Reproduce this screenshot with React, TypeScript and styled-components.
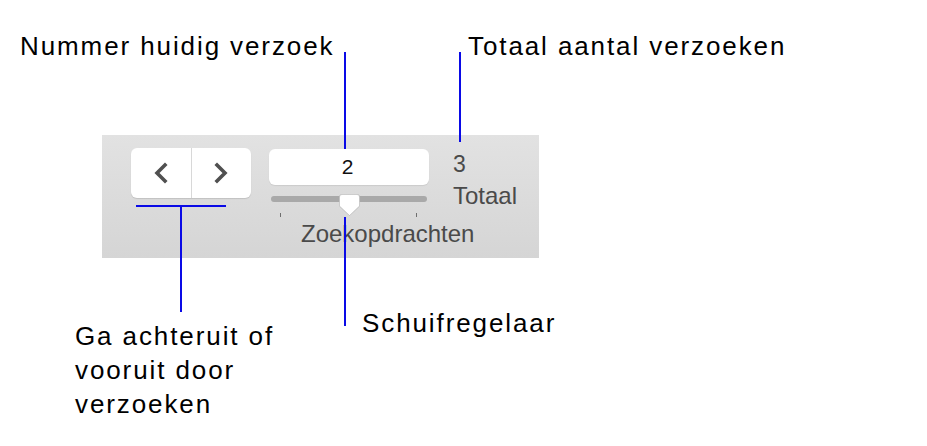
import styled, { createGlobalStyle } from 'styled-components';

const GlobalStyle = createGlobalStyle`
  html, body {
    margin: 0;
    padding: 0;
    background: #ffffff;
  }
  body {
    font-family: 'Liberation Sans', Arial, Helvetica, sans-serif;
  }
`;

const Figure = styled.div`
  position: relative;
  width: 927px;
  height: 446px;
  overflow: hidden;
  background: #ffffff;
  padding: 135px 0 0 102px;
  box-sizing: border-box;
`;

/* Toolbar strip with the request navigator */
const Toolbar = styled.div`
  width: 437px;
  height: 123px;
  box-sizing: border-box;
  display: flex;
  align-items: flex-start;
  padding: 13px 0 0 29px;
  background: linear-gradient(#e2e2e2, #d5d5d5);
`;

const Segmented = styled.div`
  display: flex;
  width: 120px;
  height: 50px;
  border-radius: 6px;
  background: #ffffff;
  box-shadow: 0 1px 1px rgba(0, 0, 0, 0.12);
  overflow: hidden;
`;

const SegButton = styled.button<{ $divider?: boolean }>`
  flex: 1;
  display: flex;
  align-items: center;
  justify-content: center;
  border: none;
  padding: 0;
  background: transparent;
  border-left: ${({ $divider }) => ($divider ? '1px solid #d8d8d8' : 'none')};
  cursor: default;
`;

const SliderColumn = styled.div`
  display: flex;
  flex-direction: column;
  width: 160px;
  margin: 1px 0 0 18px;
`;

const Field = styled.div`
  height: 36px;
  border-radius: 6px;
  background: #ffffff;
  box-shadow: 0 1px 1px rgba(0, 0, 0, 0.08);
  display: flex;
  align-items: center;
  justify-content: center;
  font-size: 21px;
  color: #111111;
  padding-right: 3px;
`;

const Track = styled.div`
  position: relative;
  height: 6px;
  margin: 11px 2px 0;
  border-radius: 3px;
  background: #a9a9a9;
`;

const Thumb = styled.svg`
  position: absolute;
  left: 68px;
  top: -2px;
  filter: drop-shadow(0 0.5px 0.5px rgba(0, 0, 0, 0.25));
`;

const Ticks = styled.div`
  display: flex;
  justify-content: space-between;
  padding: 0 12px 0 11px;
  margin-top: 11px;
`;

const Tick = styled.span`
  width: 1px;
  height: 4px;
  background: #6e6e6e;
`;

const SliderLabel = styled.div`
  margin: 3px 0 0 32px;
  font-size: 24px;
  line-height: 28px;
  color: #4a4a4a;
  white-space: nowrap;
`;

const TotalColumn = styled.div`
  display: flex;
  flex-direction: column;
  margin: 3px 0 0 24px;
  color: #4a4a4a;
`;

const Count = styled.div<{ $size: number }>`
  font-size: ${({ $size }) => $size}px;
  line-height: ${({ $size }) => $size + 4}px;
  margin-bottom: ${({ $size }) => ($size < 24 ? 4 : 0)}px;
`;

/* Callout labels and leader lines drawn over the figure */
const Callout = styled.div<{ $x: number; $y: number }>`
  position: absolute;
  left: ${({ $x }) => $x}px;
  top: ${({ $y }) => $y}px;
  font-size: 26px;
  line-height: 34px;
  letter-spacing: 1.9px;
  color: #000000;
  white-space: nowrap;
`;

const Leader = styled.span<{ $x: number; $y: number; $w: number; $h: number }>`
  position: absolute;
  left: ${({ $x }) => $x}px;
  top: ${({ $y }) => $y}px;
  width: ${({ $w }) => $w}px;
  height: ${({ $h }) => $h}px;
  background: #0a0ae6;
`;

const Chevron = ({ dir }: { dir: 'left' | 'right' }) => (
  <svg width="18" height="22" viewBox="0 0 18 22">
    <path
      d={dir === 'left' ? 'M13 3 L5 11 L13 19' : 'M5 3 L13 11 L5 19'}
      fill="none"
      stroke="#505050"
      strokeWidth="3.6"
      strokeLinecap="square"
    />
  </svg>
);

export default function App() {
  const current = 2;
  const total = 3;

  return (
    <>
      <GlobalStyle />
      <Figure>
        <Toolbar>
          <Segmented>
            <SegButton aria-label="Vorige">
              <Chevron dir="left" />
            </SegButton>
            <SegButton $divider aria-label="Volgende">
              <Chevron dir="right" />
            </SegButton>
          </Segmented>

          <SliderColumn>
            <Field>{current}</Field>
            <Track>
              <Thumb width="21" height="22" viewBox="0 0 21 22">
                <path
                  d="M3 0.5 H18 A2.5 2.5 0 0 1 20.5 3 V12 L10.5 21.5 L0.5 12 V3 A2.5 2.5 0 0 1 3 0.5 Z"
                  fill="#ffffff"
                  stroke="#c4c4c4"
                  strokeWidth="0.6"
                />
              </Thumb>
            </Track>
            <Ticks>
              <Tick />
              <Tick />
            </Ticks>
            <SliderLabel>Zoekopdrachten</SliderLabel>
          </SliderColumn>

          <TotalColumn>
            <Count $size={23}>{total}</Count>
            <Count $size={24}>Totaal</Count>
          </TotalColumn>
        </Toolbar>

        <Callout $x={20} $y={29}>Nummer huidig verzoek</Callout>
        <Callout $x={468} $y={29}>Totaal aantal verzoeken</Callout>
        <Callout $x={362} $y={306}>Schuifregelaar</Callout>
        <Callout $x={75} $y={319}>
          Ga achteruit of
          <br />
          vooruit door
          <br />
          verzoeken
        </Callout>

        <Leader $x={344} $y={52} $w={2} $h={97} />
        <Leader $x={459} $y={52} $w={2} $h={90} />
        <Leader $x={136} $y={205} $w={90} $h={2} />
        <Leader $x={180} $y={205} $w={2} $h={107} />
        <Leader $x={344} $y={217} $w={2} $h={109} />
      </Figure>
    </>
  );
}
